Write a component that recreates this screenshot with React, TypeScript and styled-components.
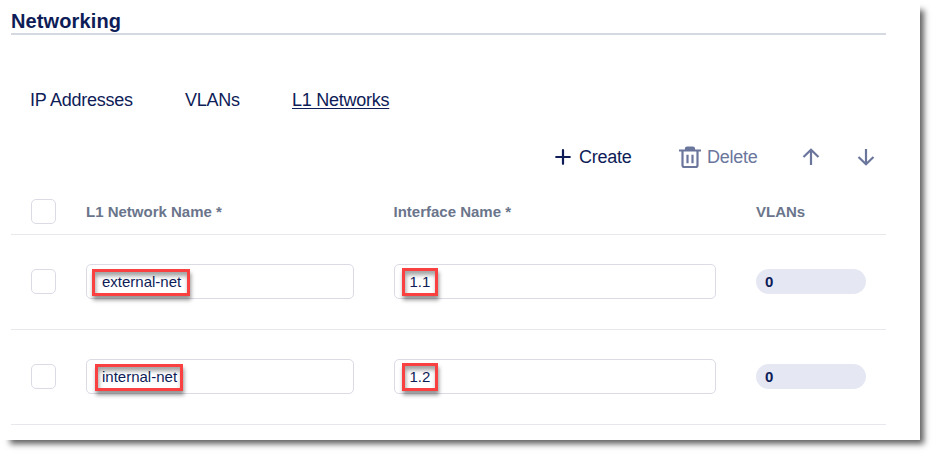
import React from "react";
import styled, { createGlobalStyle } from "styled-components";

const Global = createGlobalStyle`
  *, *::before, *::after { box-sizing: border-box; }
  body { margin: 0; min-height: 455px; background: #fff; font-family: "Liberation Sans", Arial, sans-serif; color: #0e1c57; }
`;

const Panel = styled.main`
  width: 920px;
  height: 440px;
  padding: 8px 34px 0 11px;
  background: #fff;
  box-shadow: 7px 7px 6px -3px rgba(0, 0, 0, 0.62);
`;

const Heading = styled.h1`
  margin: 0;
  height: 27px;
  border-bottom: 2px solid #d5d9e1;
  font-size: 20px;
  line-height: 26px;
  letter-spacing: 0.12px;
`;

const Tabs = styled.nav`
  display: flex;
  height: 20px;
  margin: 55px 0 0 19px;
`;

const Tab = styled.span<{ $active?: boolean; $width: number }>`
  width: ${(p) => p.$width}px;
  font-size: 18px;
  line-height: 20px;
  letter-spacing: -0.25px;
  white-space: nowrap;
  text-decoration: ${(p) => (p.$active ? "underline" : "none")};
  text-decoration-thickness: 1px;
  text-underline-offset: 2px;
`;

const Toolbar = styled.div`
  display: flex;
  height: 24px;
  margin: 35px 0 0 544px;
`;

const Action = styled.button<{ $muted?: boolean; $width: number; $gap?: number }>`
  display: flex;
  align-items: center;
  gap: ${(p) => p.$gap ?? 0}px;
  width: ${(p) => p.$width}px;
  height: 24px;
  padding: 0;
  border: 0;
  background: none;
  font: 18px/24px "Liberation Sans", Arial, sans-serif;
  letter-spacing: -0.25px;
  color: ${(p) => (p.$muted ? "#6b769d" : "#0e1c57")};
`;

const Icon = styled.svg`
  display: block;
  flex: none;
  fill: none;
  stroke: currentColor;
  stroke-width: 2.2;
`;

const Row = styled.div<{ $head?: boolean }>`
  display: grid;
  grid-template-columns: 75px 307.5px 362.5px 1fr;
  align-items: center;
  height: ${(p) => (p.$head ? 66 : 95)}px;
  padding: ${(p) => (p.$head ? "20px 0 0" : "0 0 2px")};
  border-bottom: 1px solid #e7e7ec;
`;

const Label = styled.span`
  font-size: 15px;
  font-weight: 700;
  line-height: 18px;
  color: #6a758b;
  white-space: nowrap;
`;

const Check = styled.span`
  width: 25px;
  height: 25px;
  margin-left: 20px;
  border: 1px solid #dadbe5;
  border-radius: 5px;
`;

const Field = styled.div<{ $width: number }>`
  display: flex;
  align-items: center;
  position: relative;
  width: ${(p) => p.$width}px;
  height: 35px;
  padding-left: 15px;
  border: 1px solid #dadbe5;
  border-radius: 5px;
  font-size: 15px;
  white-space: nowrap;
`;

const Marker = styled.span<{ $x: number; $y: number; $w: number; $h: number }>`
  position: absolute;
  left: ${(p) => p.$x}px;
  top: ${(p) => p.$y}px;
  width: ${(p) => p.$w}px;
  height: ${(p) => p.$h}px;
  border: 3px solid #fa4141;
  box-shadow: 1px 4px 4px rgba(0, 0, 0, 0.42), inset 1px 4px 4px rgba(0, 0, 0, 0.36);
`;

const Pill = styled.span`
  width: 110px;
  height: 25px;
  padding-left: 9px;
  border-radius: 13px;
  background: #e5e7f3;
  font-size: 15px;
  font-weight: 700;
  line-height: 25px;
`;

type Mark = [number, number, number, number];
const rows: { name: string; iface: string; nameMark: Mark; ifaceMark: Mark }[] = [
  { name: "external-net", iface: "1.1", nameMark: [5, 4, 98, 27], ifaceMark: [7, 3, 36, 28] },
  { name: "internal-net", iface: "1.2", nameMark: [8, 4, 88, 27], ifaceMark: [7, 3, 36, 28] },
];

function Highlight({ box: [x, y, w, h] }: { box: Mark }) {
  return <Marker $x={x} $y={y} $w={w} $h={h} />;
}

export default function App() {
  return (
    <>
      <Global />
      <Panel>
        <Heading>Networking</Heading>
        <Tabs>
          <Tab $width={155}>IP Addresses</Tab>
          <Tab $width={107}>VLANs</Tab>
          <Tab $width={98} $active>L1 Networks</Tab>
        </Tabs>
        <Toolbar>
          <Action $width={123} $gap={8}>
            <Icon width="16" height="16" viewBox="0 0 16 16" strokeLinecap="round"><path d="M8 1.2v13.6M1.2 8h13.6" /></Icon>
            Create
          </Action>
          <Action $width={124} $gap={5} $muted>
            <Icon width="24" height="24" viewBox="0 0 24 24">
              <path d="M1 5.5h22M8 5V3.7Q8 2.5 9.2 2.5h5.6Q16 2.5 16 3.7V5M4.5 5.5v14.8q0 1.7 1.7 1.7h11.6q1.7 0 1.7-1.7V5.5M9.5 9.8v8.4M14.5 9.8v8.4" />
              <path d="M8.5 4h7" />
            </Icon>
            Delete
          </Action>
          <Action $width={55} $muted aria-label="Move up">
            <Icon width="18" height="18" viewBox="0 0 18 18"><path d="M9 17V2M1.5 9 9 1.8 16.5 9" /></Icon>
          </Action>
          <Action $width={18} $muted aria-label="Move down">
            <Icon width="18" height="18" viewBox="0 0 18 18"><path d="M9 1v15M1.5 9 9 16.2 16.5 9" /></Icon>
          </Action>
        </Toolbar>
        <Row $head>
          <Check />
          <Label>L1 Network Name *</Label>
          <Label>Interface Name *</Label>
          <Label>VLANs</Label>
        </Row>
        {rows.map((r) => (
          <Row key={r.name}>
            <Check />
            <Field $width={268}>{r.name}<Highlight box={r.nameMark} /></Field>
            <Field $width={322}>{r.iface}<Highlight box={r.ifaceMark} /></Field>
            <Pill>0</Pill>
          </Row>
        ))}
      </Panel>
    </>
  );
}
